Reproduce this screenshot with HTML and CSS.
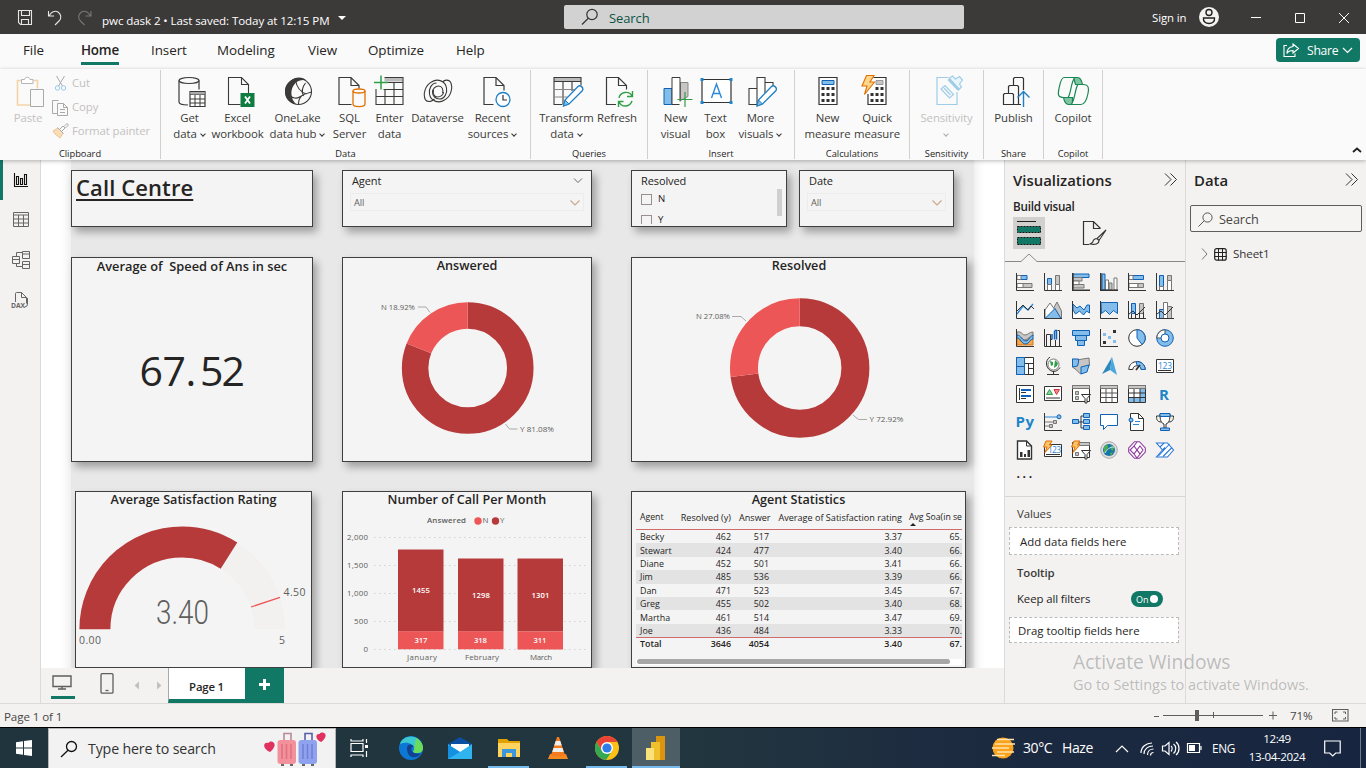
FILE: index.html
```html
<!DOCTYPE html>
<html lang="en">
<head>
<meta charset="utf-8">
<title>pwc dask 2</title>
<link rel="stylesheet" href="styles.css">
</head>
<body>
<header class="titlebar">
  <svg class="quick" width="86" height="20" viewBox="14 7 86 20"><g fill="none" stroke="#e6e6e6" stroke-width="1.1"><path d="M18.500 10.500h13v14h-11l-2-2zM21.500 10.500v5h8v-5M21.500 24.500v-5h7v5"/><path d="M48.500 11v5h5.500M49 16c2-4 6-6 9-4s4 6 1 9l-4 4"/></g><path d="M91 11v5h-5.500M90.500 16c-2-4-6-6-9-4s-4 6-1 9l4 4" fill="none" stroke="#777" stroke-width="1.100"/></svg>
  <span class="doc">pwc dask 2 • Last saved: Today at 12:15 PM</span>
  <i class="caret"></i>
  <div class="top-search"><svg width="18" height="18" viewBox="0 0 18 18"><g fill="none" stroke="#333" stroke-width="1.200"><circle cx="11" cy="6.500" r="5.200"/><path d="M7.300 10.300L1 16.500"/></g></svg><span>Search</span></div>
  <span class="signin">Sign in</span>
  <svg class="avatar" width="20" height="20" viewBox="0 0 20 20"><circle cx="10" cy="10" r="10" fill="#f3f2f1"/><g fill="none" stroke="#222" stroke-width="1.400"><circle cx="10" cy="5.500" r="3"/><path d="M4.500 11h11c.5 3.500-2 5.500-5.500 5.500S4 14.500 4.500 11z"/></g></svg>
  <svg class="winbtns" width="100" height="14" viewBox="1250 11 100 14"><g fill="none" stroke="#fff" stroke-width="1"><path d="M1251 17.500h10M1295.500 13.500h9v9h-9zM1339 13l10 10M1349 13l-10 10"/></g></svg>
</header>
<nav class="tabs">
  <span>File</span><span class="on">Home</span><span>Insert</span><span>Modeling</span><span>View</span><span>Optimize</span><span>Help</span>
  <button class="share"><svg width="17" height="15" viewBox="0 0 17 15"><g fill="none" stroke="#fff" stroke-width="1.100"><path d="M4 2.500H1v11h11v-3"/><path d="M10 1l5.500 4.500L10 10V7.500c-3 0-5 1-6 3 0-4 2-6.500 6-7z"/></g></svg><span>Share</span><svg width="11" height="7" viewBox="0 0 11 7"><path d="M1 1l4.500 4.500L10 1" fill="none" stroke="#fff" stroke-width="1.200"/></svg></button>
</nav>
<section class="ribbon">
  <div class="group clip">
    <div class="row">
      <div class="paste"><svg width="32" height="32" viewBox="12 76 32 32"><g fill="none"><path d="M21 80.500h-3.500v24.500H30M33.500 80.500h4v8" stroke="#f5d3a8" stroke-width="1.700"/><path d="M21.500 83.500v-4h3c.5-3 5-3 5.500 0h3v4z" stroke="#b5b5b5" fill="#fff"/><path d="M30.500 89.500h13v17h-13z" stroke="#a9a9a9" fill="#fafafa"/></g></svg><span>Paste</span></div>
      <ul>
        <li><svg width="17" height="17" viewBox="0 0 17 17"><g fill="none" stroke="#a9a9a9"><path d="M4.500 1l6 10M12.500 1l-6 10"/><g stroke="#9ccae6"><circle cx="5.500" cy="13" r="2.200"/><circle cx="11.500" cy="13" r="2.200"/></g></g></svg>Cut</li>
        <li><svg width="17" height="17" viewBox="0 0 17 17"><g fill="none" stroke="#a9a9a9"><path d="M5 14.500H.5V1.500h6M5.500 4.500h6l4 4v8h-10zM11.500 4.500v4h4M8 10.500h5M8 13.500h5"/></g></svg>Copy</li>
        <li><svg width="17" height="17" viewBox="0 0 17 17"><path d="M1 8l5-3 5 5-3 5C6 13 3 12 1 8z" fill="#f9dcb8" stroke="#efc28b"/><path d="M5.500 4.500l6 6M8 6l3-3 2 2-3 3M12 3.500L15 .5l1.500 1.500-3 3" fill="none" stroke="#a9a9a9"/></svg>Format painter</li>
      </ul>
    </div>
    <div class="glabel">Clipboard</div>
  </div>
  <div class="group g-data">
    <div class="row">
      <div class="btn" style="width:41px"><svg class="ri" viewBox="173.500 76 32 32"><g fill="none" stroke="#3b3a39" stroke-width="1.200"><ellipse cx="188.500" cy="80.500" rx="10" ry="3"/><path d="M178.500 80.500v21.500c0 2 4 3 9 3M198.500 80.500v9"/><path d="M189.500 91.500h15v15h-15z" fill="#fff"/><path d="M189.500 94.500h15M189.500 99h15M189.500 103h15M194.500 95v12M199.500 95v12" stroke-width="1"/></g><path d="M190 92h14v2.500h-14z" fill="#aaa"/></svg>Get<br>data<b></b></div>
      <div class="btn" style="width:55px"><svg class="ri" viewBox="221.500 76 32 32"><path d="M240 104.500h-12v-27h13l7 7v9M241 77.500v7h7" fill="none" stroke="#3b3a39" stroke-width="1.100"/><path d="M240 93h14v14h-14z" fill="#107c41"/><path d="M244.500 96.500l5 7M249.500 96.500l-5 7" stroke="#fff" stroke-width="1.800"/></svg>Excel<br>workbook</div>
      <div class="btn" style="width:65px"><svg class="ri" viewBox="281.500 76 32 32"><g fill="none" stroke="#3b3a39" stroke-width="1.100"><circle cx="298" cy="91.500" r="13"/><path d="M295 80c1 6 4 12 11 14M305 83c-4 5-4 9-2 13M311 92c-5 1-9 3-12 5-3 2-7 1-9-1M298 104c0-4 1-6 3-8"/></g><path d="M290.500 80.500c4-4 12-4 15.500 0-4-1-8 0-10.500 2-3 3-5 7-4.500 12 0 4 2 7 4.500 9.500-7-1-11-6-11-12.500 0-5 2-8 6-11z" fill="#3b3a39"/></svg>OneLake<br>data hub<b></b></div>
      <div class="btn" style="width:39px"><svg class="ri" viewBox="333.500 76 32 32"><path d="M351 104.500h-12.500v-27h12l8 8v3M350.500 77.500v8h8" fill="none" stroke="#3b3a39" stroke-width="1.200"/><path d="M352.500 91v13c0 3.500 12 3.500 12 0V91" fill="#fafafa" stroke="#e07000" stroke-width="1.300"/><ellipse cx="358.500" cy="91" rx="6" ry="2" fill="#fafafa" stroke="#e07000" stroke-width="1.300"/></svg>SQL<br>Server</div>
      <div class="btn" style="width:41px"><svg class="ri" viewBox="373.500 76 32 32"><path d="M384 78h18v3.500h-18z" fill="#bbb"/><g fill="none" stroke="#3b3a39" stroke-width="1.100"><path d="M384 77.500h18.500v27h-27V89M387 82.500h15M383 89.500h19M375.500 96.500h27M384.500 90v14M393.500 83v21"/></g><path d="M380.500 75.500v14M373.500 82.500h14" stroke="#2ea043" stroke-width="1.500"/></svg>Enter<br>data</div>
      <div class="btn" style="width:55px"><svg class="ri" viewBox="421.500 76 32 32"><g fill="none" stroke="#3b3a39" stroke-width="1.100"><path d="M425 100c-3-6 0-15 6-18 6-4 14-1 15 6 1 5-2 11-7 11-4 0-7-3-7-7 0-3 3-6 6-6 4 0 5 4 4 7"/><path d="M425 100c3 3 7 1 9-1M450 82c3 6 0 15-6 18-6 4-14 1-15-6-1-5 2-11 7-11M450 82c-2-3-6-2-8 0M433 90c-1 4 1 7 4 7 3 0 6-2 6-5"/></g></svg>Dataverse</div>
      <div class="btn" style="width:55px"><svg class="ri" viewBox="476.500 76 32 32"><path d="M493 104.500h-9.500v-27h12l8 8v5M495.500 77.500v8h8" fill="none" stroke="#3b3a39" stroke-width="1.200"/><circle cx="502.500" cy="99.500" r="7" fill="#fff" stroke="#1e7fc4" stroke-width="1.300"/><path d="M502.500 95v5h4" fill="none" stroke="#333" stroke-width="1.200"/></svg>Recent<br>sources<b></b></div>
    </div>
    <div class="glabel">Data</div>
  </div>
  <div class="group g-query">
    <div class="row">
      <div class="btn" style="width:59px"><svg class="ri" viewBox="550.500 76 32 32"><path d="M553.500 78h27v3.500h-27z" fill="#bbb"/><g fill="none" stroke="#3b3a39" stroke-width="1.100"><path d="M562 104.500h-8.500v-27h27v8M553.500 81.500h27M562.500 82v22M571.500 82v9"/><path d="M554 89.500h20M554 97h13" stroke="#888"/></g><path d="M563 106l1.500-6 13-13.500c2-2 6 1 4.500 4L568.500 104z" fill="#fff" stroke="#1e7fc4" stroke-width="1.300"/><path d="M563 106l1.500-6 4 4z" fill="#84bdea" stroke="#1e7fc4"/></svg>Transform<br>data<b></b></div>
      <div class="btn" style="width:42px"><svg class="ri" viewBox="601 76 32 32"><path d="M616 104.500h-9.500v-27h12l8 8v4M618.500 77.500v8h8" fill="none" stroke="#3b3a39" stroke-width="1.200"/><g fill="none" stroke="#2f9e44" stroke-width="1.400"><path d="M619 98c1-6 10-8 13-2M632.500 91v5.500H627M632 101c-2 6-10 7-13 1M618.500 107v-5.500h5"/></g></svg>Refresh</div>
    </div>
    <div class="glabel">Queries</div>
  </div>
  <div class="group g-insert">
    <div class="row">
      <div class="btn" style="width:39px"><svg class="ri" viewBox="659.500 76 32 32"><path d="M663.500 88.500h8v16h-8z" fill="#84bdea" stroke="#0f62b5"/><path d="M680 82.500h7.500v14l-7.500 4z" fill="#c8c6c4" stroke="#888"/><path d="M679 104.500h-7.500v-27h8v24" fill="#fff" stroke="#3b3a39"/><path d="M684.500 92v15M677 99.500h15" stroke="#2f9e44" stroke-width="1.200"/></svg>New<br>visual</div>
      <div class="btn" style="width:41px"><svg class="ri" viewBox="699.500 76 32 32"><path d="M701.500 79.500h29v23h-29z" fill="#fff" stroke="#333" stroke-width="1.200"/><path d="M711 98l5-14 5 14M712.500 93.500h7" stroke="#2b88d8" fill="none" stroke-width="1.400"/><path d="M700 78h3v3h-3zM729 78h3v3h-3zM700 101h3v3h-3zM729 101h3v3h-3z" fill="#1e86d0"/></svg>Text<br>box</div>
      <div class="btn" style="width:49px"><svg class="ri" viewBox="744.500 76 32 32"><path d="M758 104.500h-9.500v-16h8v-11h8v5h8v5M756.500 88v17M764.500 83v10" fill="#fff" stroke="#3b3a39" stroke-width="1.100"/><path d="M756.500 106l1.500-6 13-13.500c2-2 6 1 4.500 4L762 104z" fill="#fff" stroke="#1e7fc4" stroke-width="1.300"/><path d="M756.500 106l1.500-6 4 4z" fill="#84bdea" stroke="#1e7fc4"/></svg>More<br>visuals<b></b></div>
    </div>
    <div class="glabel">Insert</div>
  </div>
  <div class="group g-calc">
    <div class="row">
      <div class="btn" style="width:49px"><svg class="ri" viewBox="811.500 76 32 32"><path d="M818.500 77.500h18v27h-18z" fill="#fff" stroke="#333" stroke-width="1.200"/><path d="M821.500 80.500h12v4h-12z" fill="#84bdea" stroke="#0f62b5"/><g stroke="#333" stroke-width="3" stroke-dasharray="3 2"><path d="M821 88.500h13M821 94.500h13M821 100.500h13"/></g></svg>New<br>measure</div>
      <div class="btn" style="width:50px"><svg class="ri" viewBox="860.500 76 32 32"><path d="M873 77.500h12.500v27h-18V94" fill="#fff" stroke="#333" stroke-width="1.200"/><path d="M875.500 80.500h7v4h-7z" fill="#c8c6c4" stroke="#999"/><g stroke="#333" stroke-width="3" stroke-dasharray="3 2"><path d="M875 88.500h8M870 94.500h13M870 100.500h13"/></g><path d="M866 75.500h7.500l-4 6.500h4.500l-10 12.500 2.500-8.500h-5z" fill="#fcd68a" stroke="#e07000" stroke-width="1.100"/></svg>Quick<br>measure</div>
    </div>
    <div class="glabel">Calculations</div>
  </div>
  <div class="group g-sens">
    <div class="row">
      <div class="btn dim" style="width:73px"><svg class="ri" viewBox="930.500 76 32 32"><g fill="none" stroke="#9fcde8" stroke-width="1.200"><path d="M948 77.500h-11.500v27h20V92"/><path d="M940.500 89l4-3.500 8.500 9-4 3.500zM943.500 88l6.500 7"/><path d="M949 78l3-2 3 3 4-2.500 3 3.500-3 4 2 3-3 3z" fill="#eaf5fb"/><path d="M948 79l10 10.500" stroke-width="3"/></g></svg>Sensitivity<br><b></b></div>
    </div>
    <div class="glabel">Sensitivity</div>
  </div>
  <div class="group g-one">
    <div class="row">
      <div class="btn" style="width:59px"><svg class="ri" viewBox="997 76 32 32"><g fill="none" stroke="#333" stroke-width="1.200"><path d="M1002.500 104.500v-10l1-1h8l1 1v10zM1007.500 93v-6.500l1-1h8l1 1v18h-5M1012.500 85v-6.500l1-1h8l1 1V90M1017 104.500h3"/></g><path d="M1022.500 107V91.500M1016.500 97.500l6-6 6 6" fill="none" stroke="#1e7fc4" stroke-width="1.400"/></svg>Publish</div>
    </div>
    <div class="glabel">Share</div>
  </div>
  <div class="group g-one last">
    <div class="row">
      <div class="btn" style="width:58px"><svg class="ri" viewBox="1056.500 76 32 32"><g stroke="#1a8754" stroke-width="1.200" fill="#fafafa"><path d="M1073 77.500h4c3 0 4 2 5 7h-7z" fill="#7fc3a0"/><path d="M1072 104.500h-4c-3 0-4-2-5-7h9z" fill="#7fc3a0"/><path d="M1063.500 77.500h11c-4 3-4 17-7 20h-4c-7 0-6-4-5-9s2-11 5-11z"/><path d="M1080.500 104.500h-10c4-3 4-17 7-20h5c6 0 6 4 5 9s-3 11-7 11z"/></g></svg>Copilot</div>
    </div>
    <div class="glabel">Copilot</div>
  </div>
  <svg class="collapse" width="10" height="6" viewBox="0 0 10 6"><path d="M1 5l4-3.500L9 5" fill="none" stroke="#222" stroke-width="1.800"/></svg>
</section>
<main class="work">
  <aside class="rail">
    <div class="rbtn on"><svg width="20" height="20" viewBox="11 171 20 20"><path d="M14.500 173v13.500H28M16.500 176.500h2v8h-2zM20.500 178.500h2v6h-2zM24.500 174.500h2v10h-2z" fill="none" stroke="#111" stroke-width="1.100"/></svg></div>
    <div class="rbtn"><svg width="20" height="20" viewBox="11 210 20 20"><path d="M13.500 212.500h15v14h-15zM13.500 215h15M13.500 219h15M13.500 223h15M18.500 215v12M23.500 215v12" fill="none" stroke="#666"/></svg></div>
    <div class="rbtn"><svg width="20" height="20" viewBox="11 250 20 20"><path d="M12.500 256.500h7v7h-7zM12.500 259.500h7M22.500 251.500h7v7h-7zM22.500 254h7M22.500 261.500h7v7h-7zM22.500 264.500h7M16.500 256v-3.500h6M16.500 264v2.500h6" fill="none" stroke="#666"/></svg></div>
    <div class="rbtn"><svg width="20" height="20" viewBox="11 290 20 20"><path d="M15.500 302v-8.500q0-1 1-1h5l5 5v6M21.500 292.500v5h5M27.500 298v6q0 3-3 3" fill="none" stroke="#666"/><text x="11" y="307.500" class="dax" textLength="14" lengthAdjust="spacingAndGlyphs">DAX</text></svg></div>
  </aside>
  <div class="center">
    <div class="canvas"><div class="page">
      <div class="line one">
        <div class="card c-title"><h1>Call Centre</h1></div>
        <div class="card c-agent slicer"><div class="shead">Agent<svg width="10" height="6" viewBox="0 0 10 6"><path d="M1 .5l4 4 4-4" fill="none" stroke="#666"/></svg></div><div class="drop">All<svg width="10" height="6" viewBox="0 0 10 6"><path d="M.5 .5L5 5 9.500.5" fill="none" stroke="#c9a98f" stroke-width="1.200"/></svg></div></div>
        <div class="card c-res slicer"><div class="shead">Resolved</div><div class="checks"><div><i></i>N</div><div><i></i>Y</div></div><em class="sb"></em></div>
        <div class="card c-date slicer"><div class="shead">Date</div><div class="drop">All<svg width="10" height="6" viewBox="0 0 10 6"><path d="M.5 .5L5 5 9.500.5" fill="none" stroke="#c9a98f" stroke-width="1.200"/></svg></div></div>
      </div>
      <div class="line two">
        <div class="card k1"><h3 class="t-speed">Average of&nbsp; Speed of Ans in sec</h3><svg width="240" height="185" viewBox="72 276 240 185"><text x="139.500 162.500 185.500 200 221.500" y="386" font-size="41" fill="#252423">67.52</text></svg></div>
        <div class="card k2"><h3>Answered</h3><svg width="248" height="185" viewBox="343 276 248 185"><g fill="none" stroke-width="26.500" transform="rotate(-90 467.700 368)"><circle cx="467.700" cy="368" r="52.600" stroke="#b63a3a" pathLength="100" stroke-dasharray="81.080 18.920"/><circle cx="467.700" cy="368" r="52.600" stroke="#ec5656" pathLength="100" stroke-dasharray="18.920 81.080" stroke-dashoffset="-81.080"/></g><g fill="none" stroke="#aaa"><path d="M418 307h8l4 5.500M505.500 424l4 5h8"/></g><g class="lab"><text x="381" y="310" textLength="34" lengthAdjust="spacingAndGlyphs">N 18.92%</text><text x="520" y="432" textLength="34" lengthAdjust="spacingAndGlyphs">Y 81.08%</text></g></svg></div>
        <div class="card k3"><h3>Resolved</h3><svg width="334" height="185" viewBox="632 276 334 185"><g fill="none" stroke-width="28" transform="rotate(-90 799.700 368)"><circle cx="799.700" cy="368" r="55.700" stroke="#b63a3a" pathLength="100" stroke-dasharray="72.920 27.080"/><circle cx="799.700" cy="368" r="55.700" stroke="#ec5656" pathLength="100" stroke-dasharray="27.080 72.920" stroke-dashoffset="-72.920"/></g><g fill="none" stroke="#aaa"><path d="M732 316.500h9l5 4.500M853 415l5.500 4.500h8.500"/></g><g class="lab"><text x="696" y="319" textLength="34" lengthAdjust="spacingAndGlyphs">N 27.08%</text><text x="869.500" y="422" textLength="34" lengthAdjust="spacingAndGlyphs">Y 72.92%</text></g></svg></div>
      </div>
      <div class="line three">
        <div class="card k4"><h3 class="t-rate">Average Satisfaction Rating</h3><svg width="235" height="157" viewBox="76 510 235 157"><g fill="none" stroke-width="31"><path d="M94.900 629.300a87.300 87.300 0 0 1 174.600 0" stroke="#f3f1f0"/><path d="M94.900 629.300a87.300 87.300 0 0 1 174.600 0" stroke="#b63a3a" pathLength="100" stroke-dasharray="68 40"/></g><path d="M251 607l29-9.700" stroke="#ec5656" stroke-width="1.300"/><text x="156" y="623.500" class="din" textLength="53" lengthAdjust="spacingAndGlyphs">3.40</text><g class="gl"><text x="79" y="643.500" textLength="22">0.00</text><text x="279" y="643.500">5</text><text x="283.500" y="596" textLength="22">4.50</text></g></svg></div>
        <div class="card k5"><h3 class="t-month">Number of Call Per Month</h3><svg width="248" height="157" viewBox="343 510 248 157"><g stroke="#d2d2d2" stroke-dasharray="1.500 3.500"><path d="M374 537.500h213M374 565.500h213M374 593.500h213M374 621.500h213M374 649.500h213"/></g>
          <g fill="#b63a3a"><path d="M398 549.500h45.500v82H398zM458 558.500h45.500v73H458zM517.500 558.500h45.500v73h-45.500z"/></g><g fill="#ec5656"><path d="M398 631.300h45.500v18H398zM458 631.300h45.500v18H458zM517.500 631.500h45.500v18h-45.500z"/><circle cx="478" cy="521" r="3.700"/></g><circle cx="495.500" cy="521" r="3.700" fill="#b63a3a"/>
          <g class="ax"><text x="427" y="523" textLength="39" class="leg">Answered</text><text x="482.500" y="523">N</text><text x="500" y="523">Y</text><g text-anchor="end"><text x="368" y="540" textLength="21">2,000</text><text x="368" y="568" textLength="21">1,500</text><text x="368" y="596" textLength="21">1,000</text><text x="368" y="624" textLength="14">500</text><text x="368" y="652">0</text></g><text x="407" y="660" textLength="30">January</text><text x="465" y="660" textLength="34">February</text><text x="530" y="660" textLength="22">March</text></g>
          <g class="val"><text x="412" y="593" textLength="18">1455</text><text x="472" y="598" textLength="18">1298</text><text x="531.500" y="598" textLength="18">1301</text><text x="414.500" y="643" textLength="13">317</text><text x="474" y="643" textLength="13">318</text><text x="533.500" y="643" textLength="13">311</text></g></svg></div>
        <div class="card k6"><h3 class="t-stat">Agent Statistics</h3>
          <div class="tbl">
            <table>
              <colgroup><col style="width:40px"><col style="width:59px"><col style="width:38px"><col style="width:133px"><col style="width:56px"></colgroup>
              <thead><tr><th>Agent</th><th>Resolved (y)</th><th>Answer</th><th>Average of Satisfaction rating</th><th class="sorted">Avg Soa(in sec)</th></tr></thead>
              <tbody>
                <tr><td>Becky</td><td>462</td><td>517</td><td>3.37</td><td>65.</td></tr>
                <tr><td>Stewart</td><td>424</td><td>477</td><td>3.40</td><td>66.</td></tr>
                <tr><td>Diane</td><td>452</td><td>501</td><td>3.41</td><td>66.</td></tr>
                <tr><td>Jim</td><td>485</td><td>536</td><td>3.39</td><td>66.</td></tr>
                <tr><td>Dan</td><td>471</td><td>523</td><td>3.45</td><td>67.</td></tr>
                <tr><td>Greg</td><td>455</td><td>502</td><td>3.40</td><td>68.</td></tr>
                <tr><td>Martha</td><td>461</td><td>514</td><td>3.47</td><td>69.</td></tr>
                <tr><td>Joe</td><td>436</td><td>484</td><td>3.33</td><td>70.</td></tr>
              </tbody>
              <tfoot><tr><td>Total</td><td>3646</td><td>4054</td><td>3.40</td><td>67.</td></tr></tfoot>
            </table>
            <div class="hscroll"><i></i></div>
          </div>
        </div>
      </div>
    </div></div>
    <div class="pagetabs">
      <div class="desk"><svg width="20" height="15" viewBox="0 0 20 15"><path d="M1 1h18v10.500H1zM6 14h8M10 12v2" fill="none" stroke="#605e5c" stroke-width="1.400"/></svg></div>
      <svg class="phone" width="14" height="21" viewBox="0 0 14 21"><rect x="1" y=".700" width="12" height="19.500" rx="1" fill="none" stroke="#605e5c" stroke-width="1.300"/><path d="M5.500 17.500h3" stroke="#605e5c" stroke-width="1.300"/></svg>
      <svg class="arrows" width="30" height="9" viewBox="134 681 30 9"><path d="M139 681.500v8l-4.500-4zM157 681.500v8l4.500-4z" fill="#c3c1bf"/></svg>
      <div class="ptab">Page 1</div><div class="add"><svg width="11" height="11" viewBox="0 0 11 11"><path d="M5.500 0v11M0 5.500h11" stroke="#fff" stroke-width="3"/></svg></div>
    </div>
  </div>
  <aside class="viz">
    <div class="phead"><h2>Visualizations</h2><svg width="13" height="13" viewBox="0 0 13 13"><path d="M1 .5l6 6-6 6M6.500.5l6 6-6 6" fill="none" stroke="#333"/></svg></div>
    <div class="build">Build visual</div>
    <div class="modes"><span class="m1"><svg width="32" height="32" viewBox="1013 217 32 32"><path d="M1017 221.500h19" stroke="#222"/><path d="M1017.500 226.500h23v6h-23zM1017.500 237.500h23v7h-23z" fill="#117865" stroke="#111" stroke-dasharray="2 1"/></svg></span><svg width="26" height="26" viewBox="1082 220 26 26"><path d="M1089 244.500h-5.500v-23h10l7 7M1093.500 221.500v7h7" fill="none" stroke="#333" stroke-width="1.200"/><path d="M1106 230l-9 8.500 2 2zM1097 238.500c-3 0-4 2-4.500 4l-2.500 1.500c5 1 9 0 9-3.500z" fill="#f3f2f1" stroke="#333" stroke-width="1.100"/></svg></div>
    <svg class="notch" width="180" height="9" viewBox="0 0 180 9"><path d="M0 8.500h16l8-7.500 8 7.500h148" fill="none" stroke="#8a8886"/></svg>
    <div class="icons">
      <svg viewBox="0 0 18 18"><path class="b" d="M1 2.500h10v4H1z"/><path class="w" d="M1 2.500h4v4H1z"/><path class="g" d="M1 10.500h15v4H1z"/><path class="w" d="M1 10.500h6v4H1z"/><path class="k" d="M.5 0v17.500H18"/></svg>
      <svg viewBox="0 0 18 18"><path class="b" d="M3.500 5.500h4v6h-4z"/><path class="w" d="M3.500 11.500h4v6h-4zM11.500 11.500h4v6h-4z"/><path class="g" d="M11.500 2.500h4v9h-4z"/><path class="k" d="M.5 0v17.500H18"/></svg>
      <svg viewBox="0 0 18 18"><path class="b" d="M1 1h16v3.500H1z"/><path class="g" d="M1 4.500h9V8H1z"/><path class="w" d="M1 8h6v3.500H1z"/><path class="g" d="M1 11.500h11V15H1z"/><path class="k" d="M.8 0v17.200H18" stroke-width="1.600"/></svg>
      <svg viewBox="0 0 18 18"><path class="b" d="M2 1h3v16H2z"/><path class="w" d="M5.500 7h3v10h-3z"/><path class="g" d="M9 10h3v7H9z"/><path class="w" d="M14 5h3v12h-3z"/><path class="k" d="M.8 0v17.200H18" stroke-width="1.600"/></svg>
      <svg viewBox="0 0 18 18"><path class="b" d="M1 2.500h14.500v4H1z"/><path class="w" d="M1 2.500h4v4H1zM1 10.500h9v4H1z"/><path class="g" d="M10 10.500h5.500v4H10z"/><path class="k" d="M.5 0v17.500H18"/></svg>
      <svg viewBox="0 0 18 18"><path class="b" d="M3.500 2.500h4v11h-4z"/><path class="w" d="M3.500 13.500h4v4h-4zM11.500 7.500h4v10h-4z"/><path class="g" d="M11.500 2.500h4v5h-4z"/><path class="k" d="M.5 0v17.500H18"/></svg>

      <svg viewBox="0 0 18 18"><path d="M1 13l6-8 5 4 5-6" fill="none" stroke="#2b88d8" stroke-width="1.300"/><path class="k" d="M.5 0v17.500H18M1 10l6-6 5 5 3-4 3 3"/></svg>
      <svg viewBox="0 0 18 18"><path class="g" d="M8 10l5-9 4.500 9v7H10z"/><path class="w" stroke="#333" d="M1 9l5-7 5 7-5 8H1z"/><path class="b" d="M1 17.500l5-5 2-2 3-3 6 10z"/><path class="k" d="M.5 8v9.500H18"/></svg>
      <svg viewBox="0 0 18 18"><path class="w" d="M1 9l4 4 4-3 4 4 4-4v7H1z" style="stroke:none"/><path class="b" d="M1 3l4 4 3-2 4 4 3-5h2.500v8l-3-2-3 4-4-4-4 3-2.500-4z"/><path class="k" d="M.5 0v17.500H18"/></svg>
      <svg viewBox="0 0 18 18"><path d="M1 1.500h16.500v11l-4-3-4 4-4-4-4 3z" fill="#84bdea" stroke="#0f62b5"/><path class="k" d="M.5 0v17.500H18"/></svg>
      <svg viewBox="0 0 18 18"><path class="b" d="M3.500 2.500h4v10h-4z"/><path class="g" d="M11.500 2.500h4v10h-4z"/><path class="k" d="M.5 0v17.500H18M3.500 17v-4M7.500 17v-5M11.500 17v-5M15.500 17v-6M1 13l4-3 4 4 4-4 4-4"/></svg>
      <svg viewBox="0 0 18 18"><path class="b" d="M3.500 8.500h4v9h-4z"/><path class="g" d="M11.500 5.500h4v12h-4z"/><path class="w" stroke="#333" d="M7.500 1.500h4v16h-4z"/><path class="k" d="M.5 0v17.500H18M1 13l4-3 4 4 4-4 4-4"/></svg>

      <svg viewBox="0 0 18 18"><path d="M1 9h3v3h5l4-3h4v7H1z" fill="#f6a84b" stroke="#d9730d"/><path class="g" d="M1 3c5-1 5 3 8 3s4-3 8-3v4c-4 0-5 4-8 4S5 7 1 7z"/><path class="b" d="M1 6c4 0 5 6 9 6 3 0 4-5 7-6v4c-3 0-4 5-7 5-5 0-5-6-9-6z"/><path class="k" d="M.5 0v17.500H18"/></svg>
      <svg viewBox="0 0 18 18"><path d="M8 5v5.500M10.500 10.500V2M10.500 1.500h2v9" fill="none" stroke="#0f62b5" stroke-width="1.500"/><path class="k" d="M.5 0v17.500H18M2.500 17V5.500h4V17M8 10.500h-1.500M11.500 17v-6M15.500 17V1.500h-2"/></svg>
      <svg viewBox="0 0 18 18"><path class="b" d="M.5 1.500h17v5H.5zM3.500 6.500h11v5h-11zM5.500 11.500h7v5h-7z"/></svg>
      <svg viewBox="0 0 18 18"><path d="M3 4h3v3H3zM8 7h3v3H8zM13 11h3v3h-3z" fill="#84bdea"/><path d="M13 1h3v3h-3zM3 12h3v3H3z" fill="#333"/><path class="k" d="M.5 0v17.500H18"/></svg>
      <svg viewBox="0 0 18 18"><circle class="w" cx="9" cy="9" r="8.300" style="stroke:#333"/><path class="b" d="M9 .7v8.300l5 6.500A8.300 8.300 0 0 0 9 .7z"/></svg>
      <svg viewBox="0 0 18 18"><circle cx="9" cy="9" r="8.300" class="b"/><path class="w" d="M9 .7A8.300 8.300 0 0 0 .8 9h4.700A4 4 0 0 1 9 5z" style="stroke:#555"/><circle cx="9" cy="9" r="4" fill="#fff" stroke="#0f62b5"/></svg>

      <svg viewBox="0 0 18 18"><path class="w" d="M.5.500h17v17H.5z" style="stroke:#333"/><path class="b" d="M.5.500h8v9h-8zM.5 9.500h8v8h-8z"/><path class="k" d="M9 6.500h8.500M12.500 6.500v11M12.500 11.500h5"/></svg>
      <svg viewBox="0 0 18 18"><circle cx="9.500" cy="7.500" r="5.500" fill="#fff" stroke="#777"/><path d="M6 4l3 1v3l-2 1zM11 3l3 3-1 3-3 2z" fill="#2f9e44"/><path class="k" d="M6 0C0 4 2 13 9 14.500c3 0 5-1 7-4M9.500 14.500v3M3 17.500h12"/></svg>
      <svg viewBox="0 0 18 18"><path class="g" d="M.5 2l5 1 5-1 6.500-1 .5 7-3 5-6 4-4-4-4-3z"/><path class="b" d="M.5 2h6v3l-1 4-5 1zM9 10l8-2-2 7-6 2z"/></svg>
      <svg viewBox="0 0 18 18"><path d="M12 0L2 17l8-4z" fill="#2b88b8"/><path d="M12 0l5 18-7-5z" fill="#4aa6dd"/></svg>
      <svg viewBox="0 0 18 18"><path class="w" d="M.8 12.500C1 2 17 2 17.200 12.500h-4c-.2-5-8.200-5-8.400 0z" style="stroke:#333"/><path class="b" d="M8 4.800c5-1 9 3 9.200 7.700h-4c-.2-2.500-2-4-4-4z"/><path class="k" d="M8 13l4-5" stroke-width="1.800"/></svg>
      <svg viewBox="0 0 18 18"><path class="w" d="M.5 2.500h17v13H.5z" style="stroke:#333"/><text class="n" x="2" y="11.500" textLength="14">123</text><path class="k" d="M2 13.500h13"/></svg>

      <svg viewBox="0 0 18 18"><path class="w" d="M.5.500h17v17H.5z" style="stroke:#333"/><path d="M5 5h10M5 11h10" stroke="#0f62b5" stroke-width="1.800"/><path class="k" d="M3.500 3v12M5 7.500h5M5 13.500h5"/></svg>
      <svg viewBox="0 0 18 18"><path class="w" d="M.5 1.500h17v14H.5z" style="stroke:#333"/><path d="M2.500 9.500l3-5 3 5z" fill="#8fd0a0" stroke="#2f9e44"/><path d="M10 4.500h5.500l-3 5z" fill="#f28b8b" stroke="#d13438"/><path class="k" d="M2 13h14"/></svg>
      <svg viewBox="0 0 18 18"><path class="w" d="M.5.500h17v16H.5z" style="stroke:#333"/><path class="g" d="M.5.500h17v3H.5zM3.500 6.500h3v3h-3zM3.500 11.500h3v3h-3z"/><path class="w" d="M9.500 9.500h9l-3.500 4v4.500h-2v-4.500z" style="stroke:#333"/></svg>
      <svg viewBox="0 0 18 18"><path class="w" d="M.5.500h17v17H.5z" style="stroke:#333"/><path class="g" d="M.5.500h17v3H.5z"/><path class="k" d="M.5 8h17M.5 12.500h17M6 4v13M12 4v13" style="stroke:#555"/></svg>
      <svg viewBox="0 0 18 18"><path class="w" d="M.5.500h17v17H.5z" style="stroke:#333"/><path d="M12 4h5v13H1v-4.500h11z" fill="#84bdea"/><path class="g" d="M.5.500h17v3H.5z"/><path class="k" d="M.5 8h17M.5 12.500h17M6 4v13M12 4v13"/></svg>
      <svg viewBox="0 0 18 18"><text x="3" y="14.500" class="rp">R</text></svg>

      <svg viewBox="0 0 18 18"><text x="-.5" y="14" class="rp" textLength="18.500">Py</text></svg>
      <svg viewBox="0 0 18 18"><path d="M1 4h12" stroke="#2b88d8"/><circle class="b" cx="15" cy="3.800" r="2"/><path d="M1 9h8M1 13h4" stroke="#777"/><path class="g" d="M9.500 7.500h3v3h-3zM5.500 11.500h3v3h-3z"/><path class="k" d="M.5 0v17.500H18"/></svg>
      <svg viewBox="0 0 18 18"><path class="k" d="M6 9h6M9 3v12M9 3h3M9 15h3"/><path class="b" d="M.5 6.500h6v4h-6zM11.500.500h6v4h-6zM11.500 6.500h6v4h-6zM11.500 12.500h6v4h-6z"/></svg>
      <svg viewBox="0 0 18 18"><path class="w" d="M.5 1.500h17v11h-10L3.500 16.500v-4h-3z" style="stroke:#0f62b5"/></svg>
      <svg viewBox="0 0 18 18"><path class="w" d="M2.500.500h8l5 5v12h-13z" style="stroke:#333"/><path class="k" d="M10.500.500v5h5"/><circle class="b" cx="3" cy="7" r="2"/><path d="M7 8.500h5M5 11.500h6" stroke="#2b88d8"/></svg>
      <svg viewBox="0 0 18 18"><path class="k" d="M4 3H.5c0 4 1 6 5 6M14 3h3.500c0 4-1 6-5 6"/><path class="w" d="M4 1h10c0 6-1 9-4 10v4H8v-4C5 10 4 7 4 1z" style="stroke:#333"/><path class="b" d="M4 .500h10v3H4zM4.500 15h9v2.500h-9z"/></svg>

      <svg viewBox="0 0 18 18"><path class="w" d="M1.500 0h9l5 5v13h-14z" style="stroke:#333;stroke-width:1.400"/><path class="k" d="M10.500 0v5h5"/><path d="M4 11h2.500v5H4zM8 13h2v3H8zM11.500 9H14v7h-2.500z" fill="#333"/></svg>
      <svg viewBox="0 0 18 18"><path class="w" d="M.5 3.500h17v12H.5z" style="stroke:#333"/><text class="n" x="4" y="12" textLength="13">123</text><path class="k" d="M2 13.500h14"/><path class="z" d="M2 0h6L5.500 4H8L1 11.500 3 6H-.5z"/></svg>
      <svg viewBox="0 0 18 18"><path class="w" d="M.5 1.500h17v15H.5z" style="stroke:#333"/><path class="g" d="M7 1.500h10.500v3H7zM3.500 11.500h3v3h-3z"/><path class="w" d="M9.500 9.500h9l-3.500 4v4.500h-2v-4.500z" style="stroke:#333"/><path class="z" d="M2 0h6L5.500 4H8L1 11.500 3 6H-.5z"/></svg>
      <svg viewBox="0 0 18 18"><circle cx="9" cy="9" r="8.300" fill="#ddd" stroke="#aaa"/><circle cx="9" cy="9" r="6" fill="#1b74a8"/><path d="M4 6l3-3 1 3-2 5-2 1zM11 4l3 2-1 4-2-1zM10 12l3-1-2 4z" fill="#4caf50"/><path d="M5 12c2-4 5-6 9-6" fill="none" stroke="#bfe3f5"/></svg>
      <svg viewBox="0 0 18 18"><g fill="#fff" stroke="#8e3a9d" stroke-width="1.100"><path d="M6.500.700h5L17.300 7v4l-5.800 6.300h-5L.7 11V7z"/><path d="M6 5l3 4-3 4-4-4zM9 9l-3-4 3-4M12 5l3 4-3 4-3-4zM9 17l3-4-3-4-3 4z"/></g></svg>
      <svg viewBox="0 0 18 18"><g fill="#fff" stroke="#2b78d8" stroke-width="1.100"><path d="M.5 2h11l6 7-6 7H.5l6-7z"/><path d="M4 6l4-4M2.500 15l11-12M7 15.500l9-9M6.500 9L9 6.500"/></g></svg>
    </div>
    <div class="more">...</div>
    <div class="wells">
      <label>Values</label><div class="well a">Add data fields here</div>
      <label class="tt">Tooltip</label><div class="keep"><span>Keep all filters</span><em>On<i></i></em></div><div class="well b2">Drag tooltip fields here</div>
    </div>
  </aside>
  <aside class="data">
    <div class="phead"><h2>Data</h2><svg width="13" height="13" viewBox="0 0 13 13"><path d="M1 .5l6 6-6 6M6.500.5l6 6-6 6" fill="none" stroke="#333"/></svg></div>
    <div class="dsearch"><svg width="15" height="15" viewBox="0 0 15 15"><g fill="none" stroke="#555"><circle cx="9.500" cy="5.500" r="4.600"/><path d="M6.200 8.800L.5 14.500"/></g></svg>Search</div>
    <div class="sheet"><svg width="7" height="12" viewBox="0 0 7 12"><path d="M1 .5L6 6l-5 5.500" fill="none" stroke="#777"/></svg><svg width="13" height="13" viewBox="0 0 13 13"><rect x=".7" y=".7" width="11.500" height="11.500" rx="2" fill="none" stroke="#222" stroke-width="1.200"/><path d="M.5 4.500h12M.5 8.500h12M4.500.500v12M8.500.500v12" stroke="#222"/></svg>Sheet1</div>
  </aside>
  <div class="watermark"><p>Activate Windows</p><span>Go to Settings to activate Windows.</span></div>
</main>
<footer class="status"><span>Page 1 of 1</span><svg width="125" height="14" viewBox="1153 709 125 14"><path d="M1154 716.500h5M1163 715.500h100M1213.500 712v6M1269 715.500h8M1273 711.500v8" stroke="#605e5c"/><path d="M1195 710h4v11h-4z" fill="#605e5c"/></svg><span class="pct">71%</span><svg width="17" height="13" viewBox="0 0 17 13"><path d="M.5.500h15.500v11.500H.5z" fill="none" stroke="#605e5c" stroke-width="1.100"/><path d="M3 5V3h2.500M11 3h2.500v2M3 8v2h2.500M11 10h2.500V8" fill="none" stroke="#605e5c"/></svg></footer>
<footer class="taskbar">
  <div class="start"><svg width="16" height="16" viewBox="0 0 16 16"><path d="M0 2.200L7 1.200V7.500H0zM8 1l8-1v7.500H8zM0 8.500h7v6.300L0 13.800zM8 8.500h8V16l-8-1z" fill="#fff"/></svg></div>
  <div class="tsearch"><svg width="18" height="18" viewBox="0 0 18 18"><g fill="none" stroke="#111" stroke-width="1.300"><circle cx="11.500" cy="6.500" r="5"/><path d="M8 10.300L1 17"/></g></svg><span>Type here to search</span>
    <svg class="bags" width="64" height="34" viewBox="263 731 64 34"><path d="M284 741v-8.500h7v8.500" fill="none" stroke="#b98a94" stroke-width="1.600"/><rect x="277.500" y="739" width="18.500" height="24" rx="3" fill="#f2919b"/><path d="M282 743v15M286.500 743v15M291 743v15" stroke="#e0727e" stroke-width="1.500"/><path d="M305 741v-8.500h7v8.500" fill="none" stroke="#5560a8" stroke-width="1.600"/><rect x="298.500" y="739" width="18.500" height="24" rx="3" fill="#8fa2ee"/><path d="M303 743v15M307.500 743v15M312 743v15" stroke="#7080d6" stroke-width="1.500"/><path d="M281 763h3v2h-3zM290 763h3v2h-3zM302 763h3v2h-3zM311 763h3v2h-3z" fill="#666"/><path d="M270 751c-9-4-6-11-1.500-9 2-3 7-1 6 3-1 3-3 5-4.500 6z" fill="#e0315f"/><path d="M321 741c-7-3-5-9-1.500-8 2-3 7-1 6 2.500-1 3-3 4.500-4.500 5.500z" fill="#e0315f"/></svg></div>
  <div class="ti first"><svg width="24" height="24" viewBox="347.500 736 24 24"><path d="M351.500 743.500h12v8h-12zM351.500 739v2h12v-2M351.500 757v-2h12v2M367 739v4M367 751v6" fill="none" stroke="#fff" stroke-width="1.200"/><path d="M365.500 745h3v3h-3z" fill="#fff"/></svg></div>
  <div class="ti"><svg width="24" height="24" viewBox="0 0 24 24"><circle cx="12" cy="12" r="12" fill="#0c78d4"/><path d="M1 8C4-2 21-3 24 11c0 5-3 6-7 6-3 0-4-1-2-3 1-6-7-9-14-6z" fill="#3cc8d0"/><path d="M17 2c4 2 7 6 7 10 0 4-3 5-6 5-4 0-4-2-3-3z" fill="#6bdc5a"/><path d="M8 12c0-4 5-5 7-1-3-1-4 4 0 6 3 1 5 1 7 0-3 6-14 7-14-5z" fill="#12418f"/></svg></div>
  <div class="ti"><svg width="24" height="24" viewBox="0 0 24 24"><path d="M0 8l12-7 12 7v4H0z" fill="#0a4fa0"/><path d="M3 8h18v9H3z" fill="#fff"/><path d="M0 8l12 8L24 8v15H0z" fill="#30b4f0"/><path d="M0 23V9l12 7z" fill="#1590e0"/></svg></div>
  <div class="ti open"><svg width="24" height="24" viewBox="0 0 24 24"><path d="M1 3h9l2 2h11v4H1z" fill="#e0a000"/><path d="M1 7h22v14H1z" fill="#ffd45e"/><path d="M5 21v-8h14v8h-4v-4H9v4z" fill="#3a96dd"/></svg></div>
  <div class="ti"><svg width="24" height="24" viewBox="0 0 24 24"><path d="M4 18h16l2 5H2z" fill="#f58a1f"/><path d="M11 1h2l6 18c-2 2-12 2-14 0z" fill="#f47b20"/><path d="M9.700 5h4.600l1.400 4.500H8.200zM7.500 12h9l1.200 4H6.300z" fill="#eee"/></svg></div>
  <div class="ti open"><svg width="24" height="24" viewBox="0 0 24 24"><circle cx="12" cy="12" r="12" fill="#fbc116"/><path d="M1.600 6A12 12 0 0 1 22.400 6H12l-5 9z" fill="#ea4335"/><path d="M1.600 6A12 12 0 0 0 11 24l6-9-10 0z" fill="#34a853"/><circle cx="12" cy="12" r="6" fill="#fff"/><circle cx="12" cy="12" r="4.600" fill="#2f7de9"/></svg></div>
  <div class="ti open active"><svg width="24" height="24" viewBox="0 0 24 24"><path d="M12 0h9v24h-9z" fill="#d9950f"/><path d="M7 6h9v18H7z" fill="#efc02c"/><path d="M2 12h8v12H2z" fill="#fae27a"/></svg></div>
  <div class="tray">
    <svg width="24" height="22" viewBox="0 0 24 22"><circle cx="12" cy="11" r="10.500" fill="#f9a21b"/><path d="M6 2.500h17M4 7h20M1 11h17M6 15h17M1 18.500h13" stroke="#ffe2ae" stroke-width="1.600"/></svg>
    <span class="temp">30°C</span><span class="haze">Haze</span>
    <svg class="sys" width="88" height="18" viewBox="1116 739 88 18"><g fill="none" stroke="#fff" stroke-width="1.200"><path d="M1117 752l6-6 6 6"/><path d="M1142 753c0-6 5-10 11-10M1145 754c0-5 4-8 9-8M1148.500 755c0-4 3-6 6-6M1151.500 755.500c0-2 1-3 3-3"/><path d="M1163.500 746v5h2.500l4 3.500v-12l-4 3.500zM1172 746c1.500 1 1.500 4 0 5.500M1174.500 744c3 2 3 7 0 9.500M1177 742c4 3 4 10 0 13"/><path d="M1188.500 743.500h12v9h-12zM1202 746v4"/></g><path d="M1190 745h6v6h-6z" fill="#fff"/></svg>
    <span class="eng">ENG</span>
    <div class="clock">12:49<br>13-04-2024</div>
    <svg class="note" width="17" height="17" viewBox="0 0 17 17"><path d="M.7 1h15.500v12h-4.500l-3 3-3-3h-5z" fill="none" stroke="#fff" stroke-width="1.200"/></svg>
    <i class="peek"></i>
  </div>
</footer>
</body>
</html>
```
FILE: styles.css
```css
* { box-sizing: border-box; }
body { margin: 0; width: 1366px; height: 768px; overflow: hidden; display: flex; flex-direction: column; font: 11.4px/16px "Open Sans", "Noto Sans", sans-serif; letter-spacing: -.1px; color: #252423; background: #f3f2f1; }
h1, h2, h3, p, ul { margin: 0; padding: 0; font-weight: 600; }
ul { list-style: none; font-weight: 400; }
svg { display: block; flex: none; }

.titlebar { height: 34px; flex: none; background: #3b3a39; color: #fff; display: flex; align-items: center; padding-left: 14px; }
.doc { width: 230px; margin-left: 2px; margin-top: 8px; white-space: nowrap; font-size: 11.600px; }
.caret { margin: 2px 0 0 6px; border: 4.500px solid transparent; border-top-color: #fff; border-bottom: 0; }
.top-search { margin-left: 218px; width: 400px; height: 24px; background: #d2d2d2; border-radius: 2px; display: flex; align-items: center; padding-left: 17px; gap: 10px; font-size: 13px; color: #0b5345; }
.top-search span { padding-top: 1px; }
.signin { width: 38px; margin-left: 188px; padding-top: 2px; white-space: nowrap; }
.avatar { margin-left: 9px; }
.winbtns { margin: 1px 0 0 31px; }

.tabs { height: 35px; flex: none; background: #fafafa; display: grid; grid-template-columns: 58px 70px 66px 91px 60px 88px 820px 84px; padding-left: 23px; font-size: 13.400px; letter-spacing: -.05px; line-height: 33px; }
.tabs .on { font-weight: 600; width: 38px; height: 31px; border-bottom: 3px solid #117865; letter-spacing: -.2px; }
.share { height: 24px; margin-top: 4px; border: 0; border-radius: 4px; background: #117865; color: #fff; font: 12.200px "Open Sans"; display: flex; align-items: center; padding: 0 9px 0 7px; gap: 4px; letter-spacing: -.3px; }
.share span { margin-left: 3px; }

.ribbon { height: 91px; flex: none; background: #fafafa; display: flex; position: relative; z-index: 3; box-shadow: 0 1px 4px rgba(0,0,0,.28); color: #3b3a39; }
.group { border-right: 1px solid #d2d0ce; height: 89px; margin-top: 1px; display: flex; flex-direction: column; justify-content: space-between; flex: none; }
.row { display: flex; }
.glabel { text-align: center; font-size: 9.300px; line-height: 10px; color: #252423; letter-spacing: 0; }
.clip { width: 161px; color: #c3c1bf; }
.paste { width: 32px; margin: 6px 0 0 12px; text-align: center; }
.paste span { display: block; margin-top: 2px; }
.clip ul { margin: 1px 0 0 8px; }
.clip li { display: flex; gap: 3px; height: 24px; align-items: center; white-space: nowrap; }
.btn { text-align: center; padding-top: 6px; white-space: nowrap; }
.ri { width: 32px; height: 32px; margin: 0 auto 2px; overflow: visible; }
.btn b { display: inline-block; width: 4px; height: 4px; border: solid #333; border-width: 0 1.500px 1.500px 0; transform: rotate(45deg); margin: 0 1px 2px 4px; }
.dim { color: #c3c1bf; }
.dim b { border-color: #aaa; margin-left: 0; }
.g-data { width: 370px; padding-left: 8px; }
.g-query { width: 117px; padding-left: 6px; }
.g-insert { width: 147px; padding-left: 8px; }
.g-calc { width: 115px; padding-left: 8px; }
.g-data .glabel, .g-insert .glabel, .g-calc .glabel { margin-left: -8px; }
.g-query .glabel { margin-left: -6px; }
.g-sens { width: 74px; }
.g-one { width: 60px; }
.g-one.last { width: 59px; }
.collapse { margin: 78px 0 0 249px; }

.work { height: 543px; flex: none; display: flex; position: relative; }
.rail { width: 41px; border-right: 1px solid #dcdad8; }
.rbtn { height: 40px; padding-left: 8px; display: flex; align-items: center; border-left: 3px solid transparent; }
.rbtn.on { border-color: #117865; padding-top: 1px; }
.dax { font: bold 7.500px "Open Sans"; fill: #666; letter-spacing: 0; }
.center { width: 963px; background: #f3f2f1; }
.canvas { height: 508px; background: #fff; overflow: hidden; padding: 0 30px 0 30px; }
.page { height: 560px; background: #e8e8e8; box-shadow: 0 0 9px 3px rgba(0,0,0,.08); padding: 10px 0 0; font-family: "Open Sans"; }
.line { display: flex; }
.one { height: 57px; margin-bottom: 30px; }
.two { height: 205px; margin-bottom: 29px; }
.three { height: 177px; }
.card { background: #f4f4f4; border: 1px solid #3f3f3f; box-shadow: 4px 5px 8px rgba(0,0,0,.32); overflow: hidden; flex: none; position: relative; }
.c-title { width: 242px; padding-left: 4px; }
.c-title h1 { font-size: 22px; line-height: 32px; letter-spacing: .1px; text-decoration: underline; text-decoration-thickness: 2px; text-underline-offset: 3px; font-weight: 600; }
.c-agent { width: 250px; margin-left: 29px; }
.c-res { width: 156px; margin-left: 39px; }
.c-date { width: 155px; margin-left: 12px; }
.slicer { padding: 2px 7px; }
.shead { padding: 0 2px; display: flex; justify-content: space-between; align-items: center; font-size: 11px; letter-spacing: -.1px; }
.c-agent .shead { padding-right: 1px; }
.drop { margin-top: 4px; height: 18px; border: 1px solid #ececec; padding: 1px 3px 0; display: flex; justify-content: space-between; align-items: center; font-size: 9.300px; color: #605e5c; }
.c-res .checks { height: 35px; overflow: hidden; padding: 2px 0 0 2px; font-size: 9.600px; }
.checks div { height: 21px; line-height: 16px; display: flex; align-items: flex-start; gap: 6px; }
.checks i { width: 11px; height: 11px; border: 1px solid #9a8f8f; margin-top: 3px; }
.sb { position: absolute; right: 4px; top: 18px; width: 5px; height: 27px; background: #cfcfcf; }
.k1 { width: 242px; } .k2 { width: 250px; margin-left: 29px; } .k3 { width: 336px; margin-left: 39px; }
.k4 { width: 237px; margin-left: 4px; } .k5 { width: 250px; margin-left: 30px; } .k6 { width: 335px; margin-left: 39px; }
.card h3 { height: 18px; line-height: 16px; text-align: center; font-size: 12.600px; letter-spacing: 0; white-space: nowrap; }
.card h3.t-speed { font-size: 12.800px; letter-spacing: 0; }
.card svg text { letter-spacing: 0; }
.lab { font-size: 7.900px; fill: #605e5c; }
.din { font-family: Roboto; font-weight: 300; font-size: 34px; fill: #605e5c; }
.gl { font-size: 10.500px; fill: #605e5c; }
.ax { font-size: 7.900px; fill: #605e5c; }
.leg { font-weight: 600; }
.val { font-size: 7.700px; font-weight: 600; fill: #fff; }
.tbl { margin: 0 3px 0 4px; overflow: hidden; width: 326px; }
.tbl table { table-layout: fixed; width: 326px; border-collapse: separate; border-spacing: 0; font-size: 8.900px; letter-spacing: 0; }
.tbl th, .tbl td { padding: 0 4px; text-align: right; font-weight: 400; white-space: nowrap; height: 13.400px; line-height: 13px; }
.tbl th { height: 20px; line-height: 15px; padding-bottom: 4px; border-bottom: 1px solid #cf6b6b; font-size: 9.100px; }
.tbl th:first-child, .tbl td:first-child { text-align: left; }
.tbl th:first-child { font-size: 8.700px; }
.tbl td:last-child { padding-right: 0; }
.tbl th.sorted { text-align: left; position: relative; overflow: hidden; padding-left: 3px; font-size: 8.700px; }
.sorted::after { content: ""; position: absolute; left: 4px; bottom: 3px; border: 3px solid transparent; border-bottom-color: #222; border-top: 0; }
.tbl tbody tr:nth-child(even) td { background: #e3e3e3; }
.tbl tfoot td { border-top: 1px solid #cf6b6b; font-weight: 600; height: 13px; line-height: 12px; }
.hscroll { height: 6px; margin-top: 9px; background: #fff; }
.hscroll i { display: block; margin-left: 1px; width: 313px; height: 5px; border-radius: 3px; background: #a6a6a6; }

.pagetabs { height: 35px; display: flex; align-items: flex-start; }
.desk { margin-left: 10px; padding: 7px 2px 0 1px; width: 24px; height: 31px; border-bottom: 3px solid #117865; }
.phone { margin: 5px 0 0 25px; }
.arrows { margin: 13px 0 0 20px; }
.ptab { margin-left: 4px; width: 77px; height: 35px; background: #fff; border-left: 1px solid #aaa; border-bottom: 4px solid #117865; text-align: center; padding-right: 1px; line-height: 37px; font-weight: 600; letter-spacing: -.2px; }
.add { width: 39px; height: 35px; background: #117865; padding: 11px 0 0 14px; }

.viz { width: 182px; border-left: 1px solid #dcdad8; border-right: 1px solid #dcdad8; }
.data { width: 180px; }
.phead { height: 38px; display: flex; align-items: center; justify-content: space-between; padding: 1px 8px 0; }
.data .phead { padding-right: 8px; }
.phead h2 { font-size: 14.900px; letter-spacing: 0; font-weight: 600; padding-top: 1px; }
.build { padding-left: 8px; line-height: 16px; font-size: 11.700px; font-weight: 600; letter-spacing: -.25px; }
.modes { display: flex; align-items: center; padding: 3px 0 0 8px; gap: 37px; }
.m1 { background: #d2d0ce; }
.notch { margin-top: 4px; }
.icons { display: grid; grid-template-columns: repeat(6, 28px); grid-auto-rows: 28px; padding: 11px 0 0 11px; }
.icons svg { width: 18px; height: 18px; overflow: visible; }
.k { fill: none; stroke: #333; } .b { fill: #84bdea; stroke: #0f62b5; } .g { fill: #c8c6c4; stroke: #777; } .w { fill: #fff; stroke: #777; } .z { fill: #fcc26a; stroke: #e07000; }
.n { font: 8.500px "Open Sans"; fill: #2b88d8; letter-spacing: 0; }
.rp { font: 700 15px "Open Sans"; fill: #1e86c8; letter-spacing: 0; }
.more { padding-left: 11px; font-size: 17px; line-height: 10px; letter-spacing: 1.600px; margin-top: -2px; height: 20px; }
.wells { margin-top: 9px; border-top: 1px solid #d8d6d4; padding: 9px 6px 0 4px; font-size: 11.400px; }
.wells label { display: block; padding-left: 8px; color: #3b3a39; }
.wells .tt { font-weight: 600; margin-top: 10px; letter-spacing: -.1px; }
.well { height: 28px; border: 1px dashed #bbb; background: #fff; padding-left: 10px; line-height: 27px; }
.well.a { margin-top: 5px; letter-spacing: 0; }
.well.b2 { height: 26px; line-height: 25px; padding-left: 8px; margin-top: 10px; letter-spacing: 0; }
.keep { display: flex; justify-content: space-between; align-items: center; padding: 0 16px 0 8px; margin-top: 10px; }
.keep em { width: 32px; height: 16px; border-radius: 8px; background: #117865; color: #fff; font: 9px "Open Sans"; display: flex; align-items: center; padding-left: 5px; gap: 2px; }
.keep em i { width: 8px; height: 8px; border-radius: 50%; background: #fff; }
.dsearch { margin: 7px 4px 0 4px; height: 27px; border: 1px solid #605e5c; border-radius: 2px; background: #f5f4f3; display: flex; align-items: center; padding: 1px 0 0 7px; gap: 6px; font-size: 12.700px; color: #484644; }
.sheet { margin: 14px 0 0 15px; display: flex; align-items: center; gap: 6px; color: #333; font-size: 11.600px; }
.watermark { position: absolute; left: 1073px; top: 489px; color: rgba(90,90,90,.37); white-space: nowrap; font-size: 14.500px; letter-spacing: 0; z-index: 4; }
.watermark p { font-weight: 400; font-size: 19.200px; line-height: 26px; letter-spacing: 0; }
.watermark span { display: block; line-height: 20px; letter-spacing: -.05px; }

.status { height: 24px; flex: none; border-top: 1px solid #dcdad8; display: flex; align-items: center; padding-left: 4px; color: #484644; font-size: 11.600px; }
.status > span:first-child { width: 1149px; padding-top: 2px; }
.pct { width: 42px; padding: 1px 0 0 12px; margin-right: 12px; }

.taskbar { height: 41px; flex: none; display: flex; border-top: 1px solid #000; color: #fff; background: linear-gradient(90deg, #20343e, #22363f 50%, #1c2a40 72%, #172540); }
.start { width: 48px; padding: 12px 0 0 16px; }
.tsearch { width: 288px; background: #f2f2f2; border: 1px solid #b5b5b5; border-bottom: 0; display: flex; align-items: center; padding-left: 11px; color: #333; font-size: 14.200px; letter-spacing: -.15px; }
.tsearch span { margin-left: 10px; width: 175px; }
.ti { width: 49px; display: flex; justify-content: center; align-items: center; border: solid transparent; border-width: 0 4px; }
.ti.first { width: 50px; padding-right: 4px; }
.taskbar .open { background: linear-gradient(#76b9ed, #76b9ed) 0 100% / 100% 2px no-repeat padding-box; }
.taskbar .active { width: 48px; margin-left: 1px; border: 0; background: linear-gradient(#76b9ed, #76b9ed) 0 100% / 100% 2px no-repeat, #4d5e66; }
.tray { margin-left: auto; display: flex; align-items: center; width: 375px; font-size: 14px; letter-spacing: -.4px; }
.temp { width: 30px; margin-left: 8px; } .haze { width: 31px; margin-left: 9px; } .sys { margin-left: 22px; }
.eng { font-size: 11.800px; width: 25px; margin-left: 9px; }
.clock { width: 70px; margin-left: 5px; text-align: center; font-size: 11.600px; line-height: 18px; letter-spacing: -.4px; padding-bottom: 1px; }
.note { margin-left: 12px; }
.peek { margin-left: 19px; width: 1px; height: 40px; background: #6f7a88; }
```
